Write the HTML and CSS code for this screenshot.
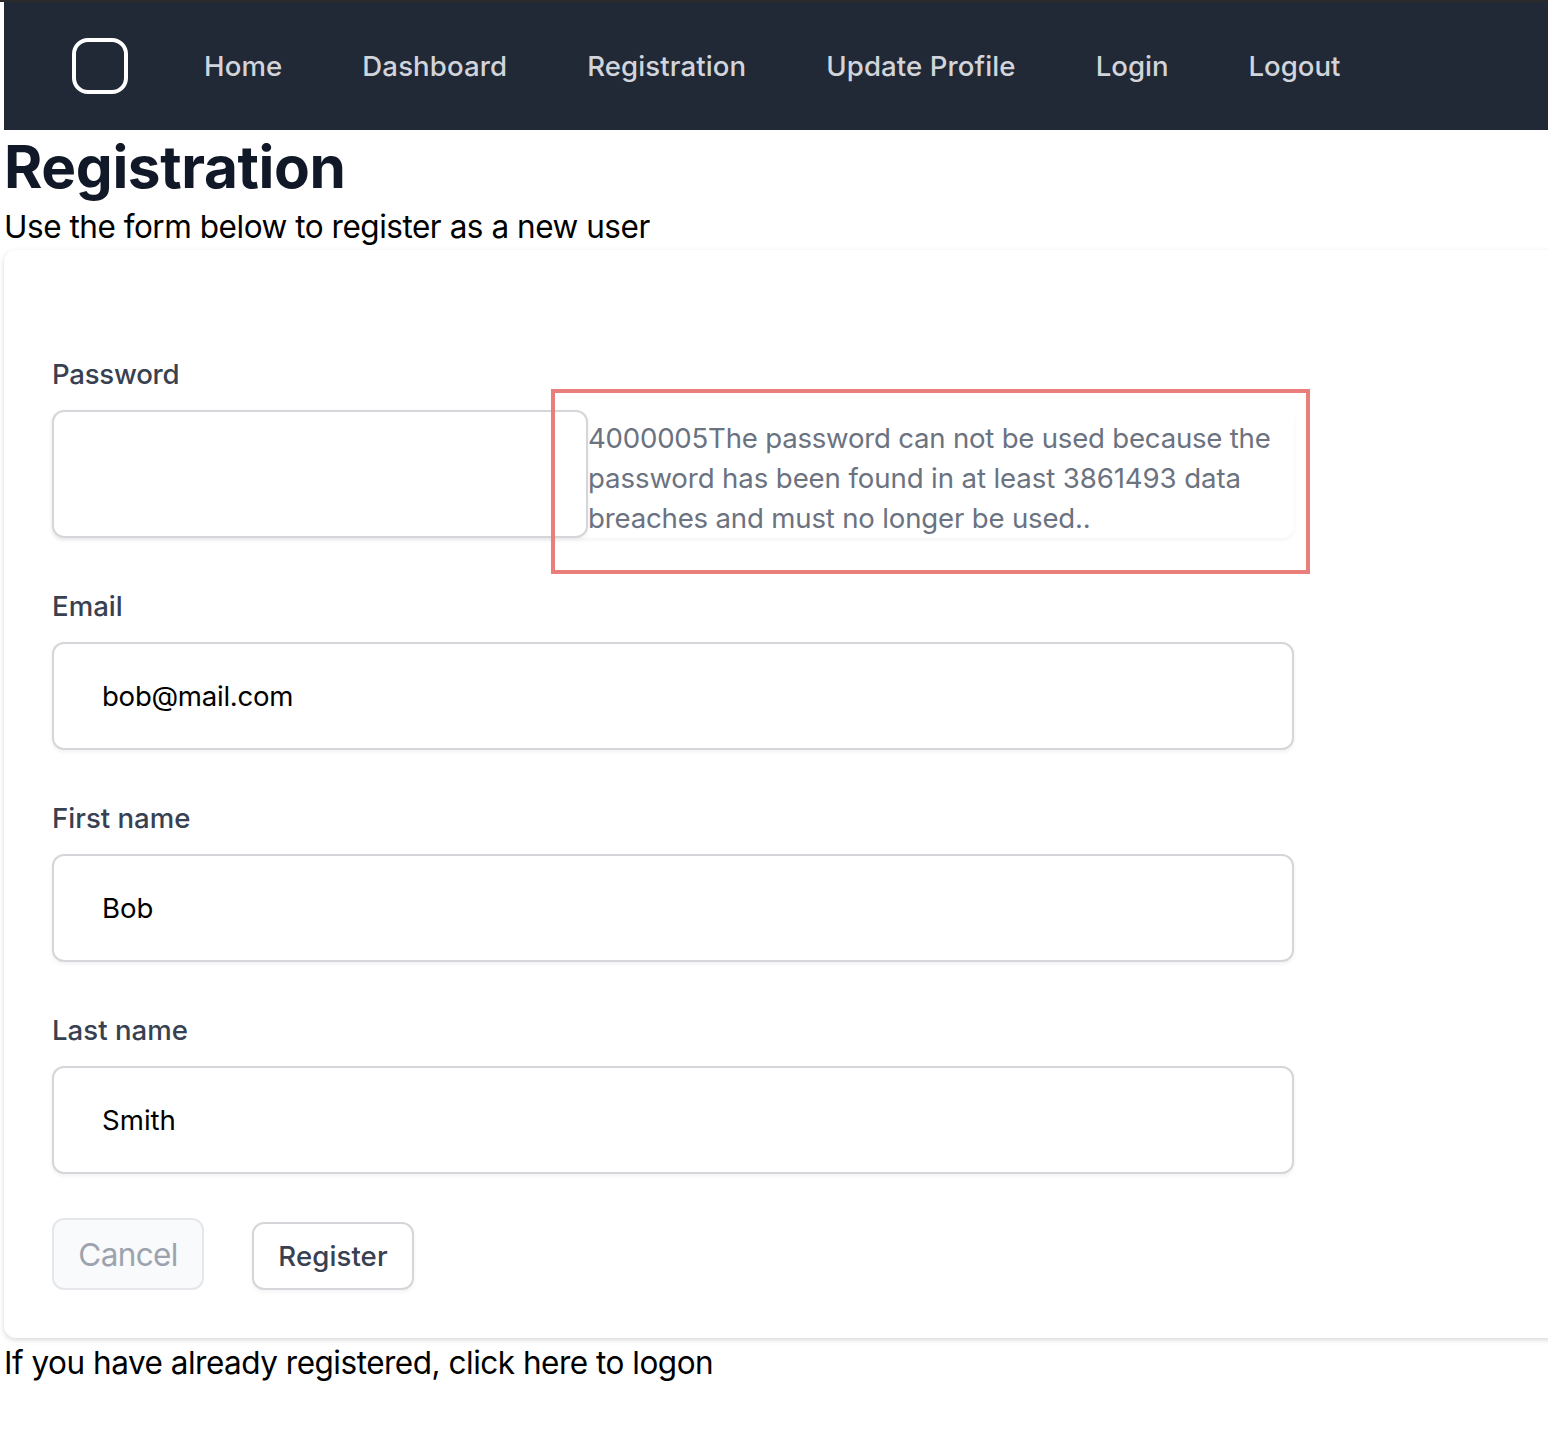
FILE: index.html
```html
<!DOCTYPE html>
<html lang="en">
<head>
<meta charset="utf-8">
<title>Registration</title>
<link rel="stylesheet" href="styles.css">
</head>
<body>
<div class="topline"></div>
<div class="page">
  <nav class="nav">
    <svg class="logo" viewBox="0 0 56 56" aria-hidden="true"><rect x="2" y="2" width="52" height="52" rx="14"/></svg>
    <a class="link">Home</a>
    <a class="link">Dashboard</a>
    <a class="link">Registration</a>
    <a class="link">Update Profile</a>
    <a class="link tight">Login</a>
    <a class="link tight">Logout</a>
  </nav>
  <h1 class="title"><span>Registration</span></h1>
  <p class="text intro">Use the form below to register as a new user</p>
  <form class="card">
    <div class="field">
      <label class="label password-label" for="password">Password</label>
      <div class="group">
        <input class="input password" id="password" type="password">
        <p class="error"><span class="error-lead">4000005The password can not be used because the</span><br><span class="error-mid">password has been found in at least 3861493 data</span><br><span class="error-tail">breaches and must no longer be used..</span></p>
        <div class="highlight"></div>
      </div>
    </div>
    <div class="field">
      <label class="label" for="email">Email</label>
      <input class="input email" id="email" type="text" value="bob@mail.com">
    </div>
    <div class="field">
      <label class="label" for="first">First name</label>
      <input class="input" id="first" type="text" value="Bob">
    </div>
    <div class="field">
      <label class="label" for="last">Last name</label>
      <input class="input" id="last" type="text" value="Smith">
    </div>
    <div class="actions">
      <button class="button cancel" type="button" disabled>Cancel</button>
      <button class="button register" type="button">Register</button>
    </div>
  </form>
  <p class="text outro">If you have already registered, click here to logon</p>
</div>
</body>
</html>
```
FILE: styles.css
```css
* { box-sizing: border-box; }
body {
  margin: 0;
  height: 1454px;
  overflow: hidden;
  background: #fff;
  color: #000;
  font-family: Inter, "Liberation Sans", sans-serif;
  font-size: 27.6px;
  font-weight: 430;
  line-height: 40px;
}
h1, p { margin: 0; }
.topline { height: 2px; background: #2a2a2b; }
.page { padding-left: 4px; }
.nav {
  display: flex;
  align-items: center;
  height: 128px;
  padding-left: 68px;
  background: #222936;
}
.logo { width: 56px; height: 56px; margin-right: 76px; fill: none; stroke: #fff; stroke-width: 4; }
.link {
  flex: none;
  margin-right: 80px;
  color: #d1d5db;
  font-weight: 550;
  letter-spacing: .1px;
  white-space: nowrap;
}
.tight { letter-spacing: -.03px; }
.title {
  height: 72px;
  padding-top: 2px;
  color: #111827;
  font-size: 58.5px;
  font-weight: 730;
  line-height: 70px;
  letter-spacing: -.38px;
}
.text {
  height: 48px;
  padding-top: 2px;
  font-size: 31.5px;
  line-height: 46px;
  white-space: nowrap;
}
.intro { letter-spacing: -.47px; }
.outro { letter-spacing: -.49px; }
.card {
  display: flex;
  flex-direction: column;
  gap: 48px;
  height: 1088px;
  margin-right: -12px;
  padding: 104px 48px 48px;
  border-radius: 12px;
  background: #fff;
  box-shadow: 0 2px 6px rgba(0, 0, 0, .1), 0 2px 4px rgba(0, 0, 0, .06);
}
.field { display: flex; flex-direction: column; gap: 16px; width: 1242px; }
.label { color: #374151; font-weight: 550; }
.password-label { letter-spacing: -.25px; }
.input {
  width: 100%;
  height: 108px;
  padding: 0 48px;
  border: 2px solid #d4d6da;
  border-radius: 12px;
  background: #fff;
  box-shadow: 0 2px 4px rgba(0, 0, 0, .06);
  color: #000;
  font: inherit;
  letter-spacing: 0;
  outline: 0;
}
.email { letter-spacing: -.28px; }
.group {
  position: relative;
  display: flex;
  height: 128px;
  border-radius: 12px;
  box-shadow: 0 2px 4px rgba(0, 0, 0, .05);
}
.password { flex: none; width: 536px; height: 128px; }
.error { padding-top: 8px; color: #6b7280; white-space: nowrap; }
.error-lead { letter-spacing: -.22px; }
.error-mid { letter-spacing: -.1px; }
.error-tail { letter-spacing: -.18px; }
.highlight {
  position: absolute;
  left: 499px;
  top: -21px;
  width: 759px;
  height: 185px;
  border: 4px solid #e97e7a;
}
.actions { display: flex; align-items: flex-end; gap: 48px; margin-top: -4px; }
.button {
  padding: 0;
  border: 2px solid #d4d6da;
  border-radius: 12px;
  background: #fff;
  font-family: inherit;
}
.cancel {
  width: 152px;
  height: 72px;
  padding-top: 1px;
  border-color: #e5e7eb;
  background: #f9fafb;
  color: #9ca3af;
  font-size: 31.5px;
  font-weight: 430;
  line-height: 46px;
  letter-spacing: -.65px;
}
.register {
  width: 162px;
  height: 68px;
  color: #374151;
  font-size: 27.6px;
  font-weight: 550;
  letter-spacing: .1px;
  box-shadow: 0 2px 4px rgba(0, 0, 0, .05);
}
```
